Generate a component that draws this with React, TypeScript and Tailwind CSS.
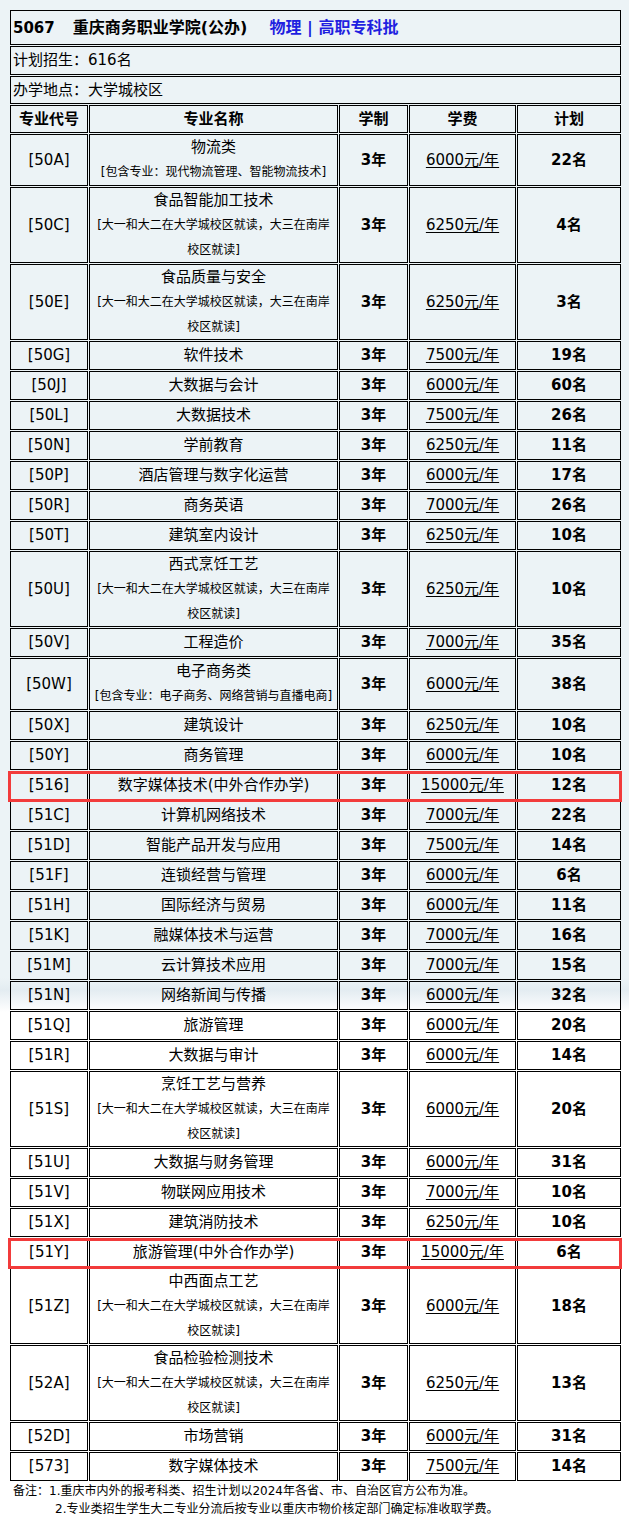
import React from "react";

const CAMPUS = "campus";

interface Major {
  code: string;
  name: string;
  note?: string;
  fee: number;
  plan: number;
  highlight?: boolean;
}

const majors: Major[] = [
  { code: "50A", name: "物流类", note: "包含专业：现代物流管理、智能物流技术", fee: 6000, plan: 22 },
  { code: "50C", name: "食品智能加工技术", note: CAMPUS, fee: 6250, plan: 4 },
  { code: "50E", name: "食品质量与安全", note: CAMPUS, fee: 6250, plan: 3 },
  { code: "50G", name: "软件技术", fee: 7500, plan: 19 },
  { code: "50J", name: "大数据与会计", fee: 6000, plan: 60 },
  { code: "50L", name: "大数据技术", fee: 7500, plan: 26 },
  { code: "50N", name: "学前教育", fee: 6250, plan: 11 },
  { code: "50P", name: "酒店管理与数字化运营", fee: 6000, plan: 17 },
  { code: "50R", name: "商务英语", fee: 7000, plan: 26 },
  { code: "50T", name: "建筑室内设计", fee: 6250, plan: 10 },
  { code: "50U", name: "西式烹饪工艺", note: CAMPUS, fee: 6250, plan: 10 },
  { code: "50V", name: "工程造价", fee: 7000, plan: 35 },
  { code: "50W", name: "电子商务类", note: "包含专业：电子商务、网络营销与直播电商", fee: 6000, plan: 38 },
  { code: "50X", name: "建筑设计", fee: 6250, plan: 10 },
  { code: "50Y", name: "商务管理", fee: 6000, plan: 10 },
  { code: "516", name: "数字媒体技术(中外合作办学)", fee: 15000, plan: 12, highlight: true },
  { code: "51C", name: "计算机网络技术", fee: 7000, plan: 22 },
  { code: "51D", name: "智能产品开发与应用", fee: 7500, plan: 14 },
  { code: "51F", name: "连锁经营与管理", fee: 6000, plan: 6 },
  { code: "51H", name: "国际经济与贸易", fee: 6000, plan: 11 },
  { code: "51K", name: "融媒体技术与运营", fee: 7000, plan: 16 },
  { code: "51M", name: "云计算技术应用", fee: 7000, plan: 15 },
  { code: "51N", name: "网络新闻与传播", fee: 6000, plan: 32 },
  { code: "51Q", name: "旅游管理", fee: 6000, plan: 20 },
  { code: "51R", name: "大数据与审计", fee: 6000, plan: 14 },
  { code: "51S", name: "烹饪工艺与营养", note: CAMPUS, fee: 6000, plan: 20 },
  { code: "51U", name: "大数据与财务管理", fee: 6000, plan: 31 },
  { code: "51V", name: "物联网应用技术", fee: 7000, plan: 10 },
  { code: "51X", name: "建筑消防技术", fee: 6250, plan: 10 },
  { code: "51Y", name: "旅游管理(中外合作办学)", fee: 15000, plan: 6, highlight: true },
  { code: "51Z", name: "中西面点工艺", note: CAMPUS, fee: 6000, plan: 18 },
  { code: "52A", name: "食品检验检测技术", note: CAMPUS, fee: 6250, plan: 13 },
  { code: "52D", name: "市场营销", fee: 6000, plan: 31 },
  { code: "573", name: "数字媒体技术", fee: 7500, plan: 14 },
];

const cell = "border border-black text-center";

function rowHeight(m: Major) {
  if (m.note === CAMPUS) return "h-[76px]";
  if (m.note) return "h-[52px]";
  return "h-[29px]";
}

function MajorName({ m }: { m: Major }) {
  if (!m.note) return <>{m.name}</>;
  if (m.note === CAMPUS)
    return (
      <>
        <div className="leading-[25px]">{m.name}</div>
        <div className="text-[12px] leading-[25px]">[大一和大二在大学城校区就读，大三在南岸</div>
        <div className="text-[12px] leading-[24px]">校区就读]</div>
      </>
    );
  return (
    <>
      <div className="leading-[25px]">{m.name}</div>
      <div className="text-[12px] leading-[25px]">[{m.note}]</div>
    </>
  );
}

export default function App() {
  return (
    <div className="min-h-[1519px] bg-[linear-gradient(to_bottom,#ecf3f6_0px,#ecf3f6_978px,#e3ecf1_990px,#ffffff_1012px)] pl-[9px] pt-[9px] font-['DejaVu_Sans','Noto_Sans_CJK_SC',sans-serif] text-[15px] text-black">
      <table className="w-[613px] table-fixed border-separate border-spacing-[1px]">
        <colgroup>
          <col className="w-[78px]" />
          <col className="w-[249px]" />
          <col className="w-[69px]" />
          <col className="w-[107px]" />
          <col className="w-[104px]" />
        </colgroup>
        <tbody>
          <tr className="h-[35px]">
            <td colSpan={5} className="border border-black pl-[2px] text-[16px] font-bold whitespace-nowrap">
              <span className="text-[15px]">5067</span>
              <span className="ml-[18px]">重庆商务职业学院(公办)</span>
              <span className="ml-[22px] text-[#1f1fe0]">物理 | 高职专科批</span>
            </td>
          </tr>
          <tr className="h-[29px]">
            <td colSpan={5} className="border border-black pl-[2px]">
              计划招生：616名
            </td>
          </tr>
          <tr className="h-[28px]">
            <td colSpan={5} className="border border-black pl-[2px]">
              办学地点：大学城校区
            </td>
          </tr>
          <tr className="h-[28px] font-bold">
            <td className={cell}>专业代号</td>
            <td className={cell}>专业名称</td>
            <td className={cell}>学制</td>
            <td className={cell}>学费</td>
            <td className={cell}>计划</td>
          </tr>
          {majors.map((m) => (
            <tr key={m.code} className={rowHeight(m)}>
              <td className={`${cell} ${m.highlight ? "relative" : ""}`}>
                [{m.code}]
                {m.highlight && (
                  <div className="pointer-events-none absolute -top-px -bottom-[3px] -left-[3px] w-[614px] border-[3px] border-[#f23b3b]" />
                )}
              </td>
              <td className={cell}>
                <MajorName m={m} />
              </td>
              <td className={`${cell} font-bold`}>3年</td>
              <td className={cell}>
                <span className="underline underline-offset-2">{m.fee}元/年</span>
              </td>
              <td className={`${cell} font-bold`}>{m.plan}名</td>
            </tr>
          ))}
        </tbody>
      </table>
      <div className="text-[12px] leading-[18px]">
        <p className="pl-[4px]">备注：1.重庆市内外的报考科类、招生计划以2024年各省、市、自治区官方公布为准。</p>
        <p className="pl-[46px]">2.专业类招生学生大二专业分流后按专业以重庆市物价核定部门确定标准收取学费。</p>
      </div>
    </div>
  );
}
